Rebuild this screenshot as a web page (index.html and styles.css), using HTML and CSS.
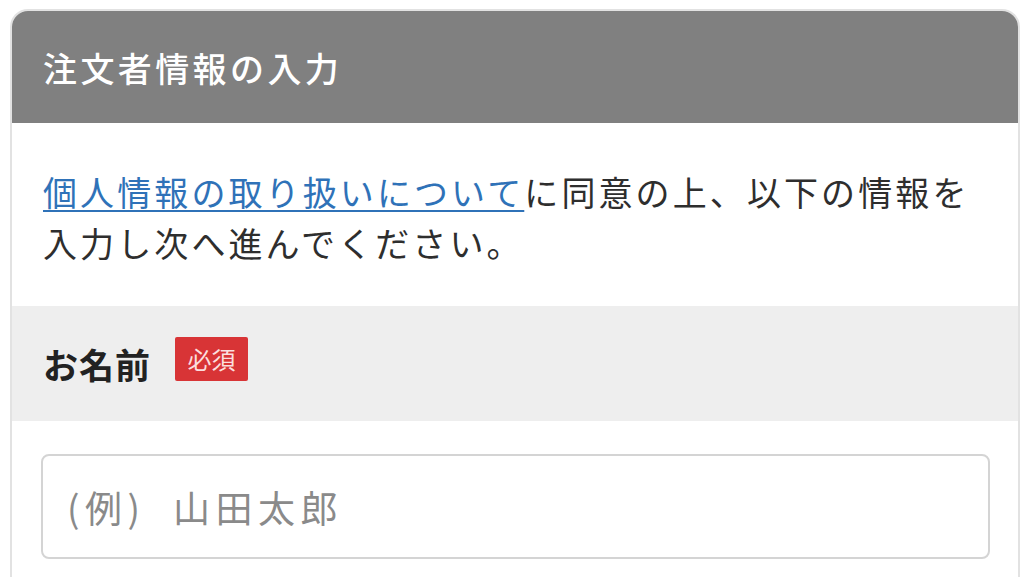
FILE: index.html
```html
<!DOCTYPE html>
<html lang="ja">
<head>
<meta charset="utf-8">
<link rel="stylesheet" href="styles.css">
</head>
<body>
<div class="page">
  <section class="card">
    <header class="card-head">注文者情報の入力</header>
    <div class="intro">
      <p><a href="#" class="link">個人情報の取り扱いについて</a>に同意の上、以下の情報を入力し次へ進んでください。</p>
    </div>
    <div class="field-label">
      <span class="label-text">お名前</span>
      <span class="badge">必須</span>
    </div>
    <div class="field-body">
      <input class="text-input" type="text" placeholder="(例)  山田太郎">
    </div>
  </section>
</div>
</body>
</html>
```

FILE: styles.css
```css
html, body {
  margin: 0;
  padding: 0;
  background: #ffffff;
  height: 100%;
  overflow: hidden;
}
body {
  font-family: "Noto Sans CJK JP", "Noto Sans", sans-serif;
  color: #333333;
}
.page {
  padding: 9px 4px 0 10px;
}
.card {
  border: 2px solid #e2e2e2;
  border-bottom: none;
  border-radius: 18px 18px 0 0;
  overflow: hidden;
  background: #ffffff;
}
.card-head {
  background: #808080;
  color: #ffffff;
  height: 112px;
  display: flex;
  align-items: center;
  padding-left: 31px;
  font-size: 34px;
  font-weight: 500;
  letter-spacing: 3.4px;
}
.intro {
  padding: 43px 30px 38px 31px;
}
.intro p {
  margin: 0;
  font-size: 34px;
  line-height: 51px;
  letter-spacing: 3.1px;
  color: #2e2e2e;
}
.link {
  color: #2f72b8;
  text-decoration: underline;
  text-decoration-thickness: 2px;
  text-underline-offset: 4px;
}
.field-label {
  background: #eeeeee;
  height: 115px;
  display: flex;
  align-items: center;
  padding-left: 31px;
  gap: 24px;
}
.label-text {
  font-size: 35px;
  font-weight: 700;
  color: #222222;
  letter-spacing: 1px;
}
.badge {
  background: #d83436;
  color: #fbdede;
  font-size: 24px;
  width: 73px;
  height: 44px;
  margin-bottom: 10px;
  display: flex;
  align-items: center;
  justify-content: center;
  border-radius: 2px;
}
.field-body {
  padding: 33px 29px 40px 29px;
}
.text-input {
  display: block;
  box-sizing: border-box;
  width: 949px;
  height: 105px;
  border: 2px solid #d4d4d4;
  border-radius: 8px;
  padding: 0 0 0 24px;
  font-family: "Noto Sans CJK JP", "Noto Sans", sans-serif;
  font-size: 37px;
  letter-spacing: 5.5px;
  color: #333333;
  background: #ffffff;
  outline: none;
}
.text-input::placeholder {
  color: #8a8a8a;
}
```
